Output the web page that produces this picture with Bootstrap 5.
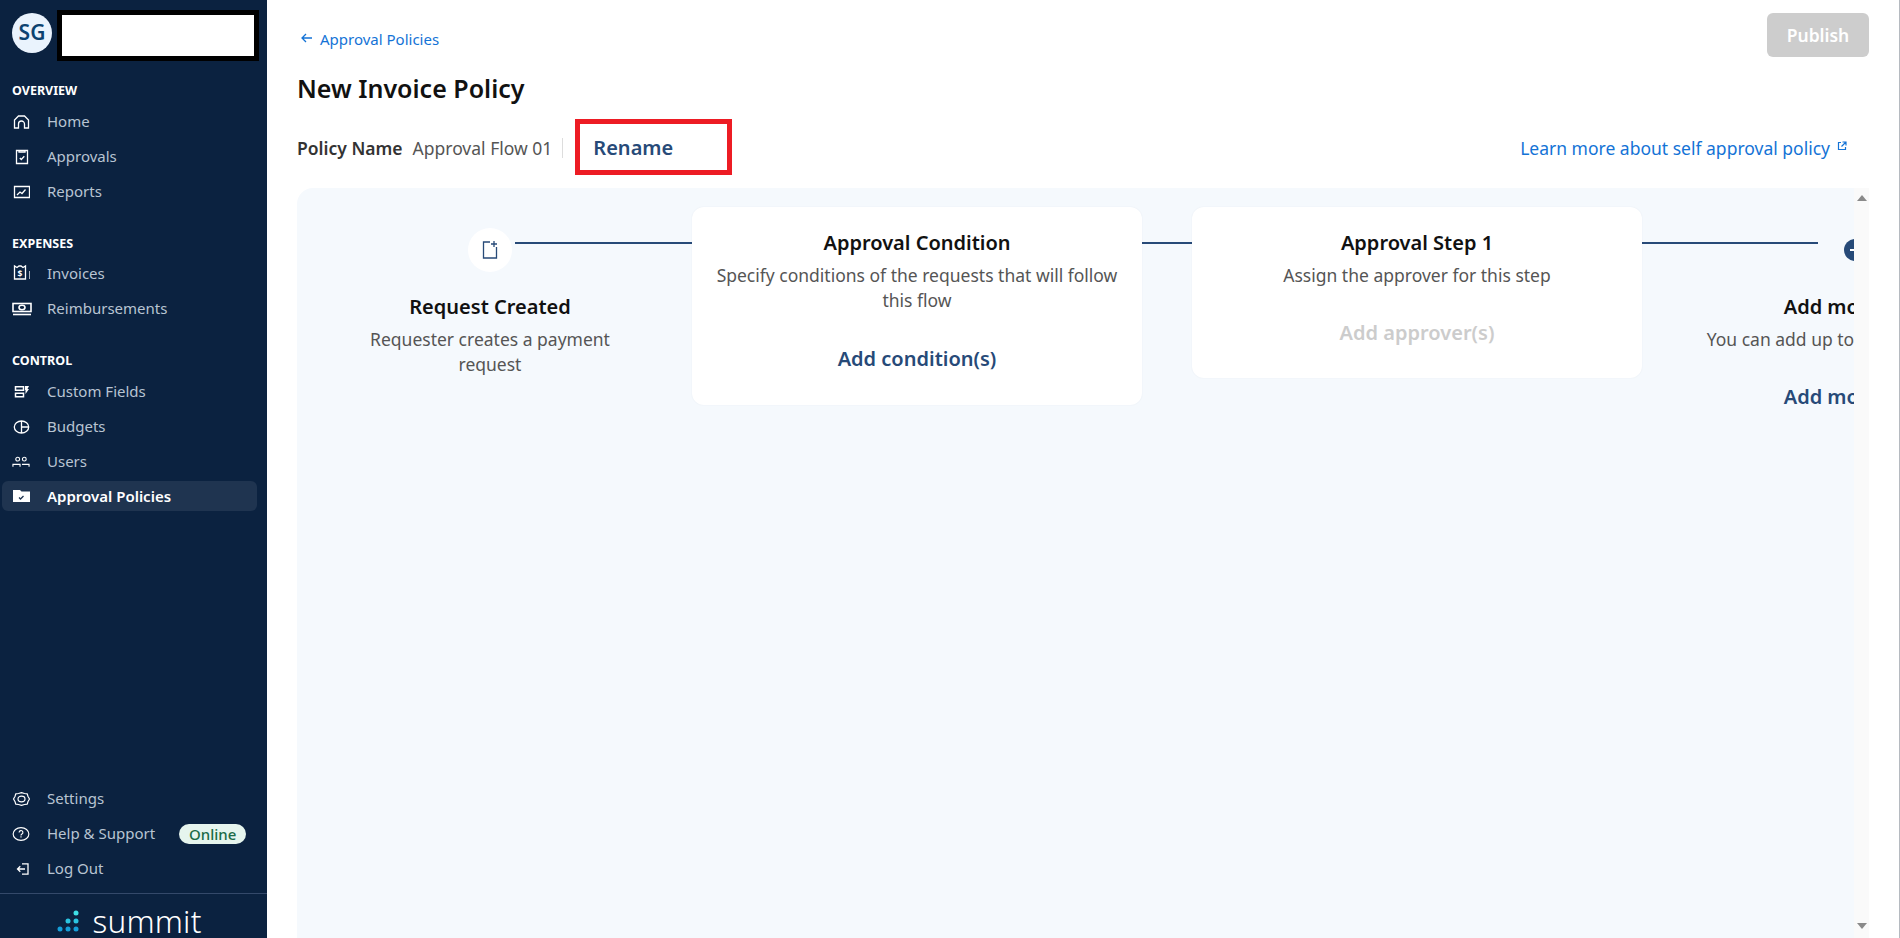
<!doctype html>
<html lang="en">
<head>
<meta charset="utf-8">
<title>New Invoice Policy</title>
<link href="https://cdn.jsdelivr.net/npm/bootstrap@5.3.0/dist/css/bootstrap.min.css" rel="stylesheet">
<style>
html,body{height:100%;overflow:hidden}
body{font-family:"Noto Sans",sans-serif;background:#fff;color:#111;border-right:1px solid #b5bac0}
.shell{height:938px}
.side{width:267px;background:#0b2240;color:#b8c4d2;flex:none}
.acct{height:69px;padding:10px 8px 0 12px;gap:5px}
.avatar{width:40px;height:40px;background:#eaf3fd;color:#0c4270;font-weight:600;font-size:21px;margin-top:3px}
.redact{width:202px;height:51px;background:#fff;border:5px solid #000}
.sect{font-size:12.5px;font-weight:700;color:#fff;padding-left:12px;line-height:16px;margin:14px 0 5px}
.sect-gap{margin:27px 0 4px}
.sect-ctl{margin:27px 0 5px}
.item{height:35px;padding-left:12px;font-size:15px;color:#b8c4d2;text-decoration:none;gap:17px}
.item svg{width:18px;height:18px;flex:none}
.item.on{background:#1f3450;color:#fff;font-weight:600;border-radius:6px;margin:2px 10px 0 2px;padding-left:10px;height:30px}
.pill{background:#e6f5ee;color:#1c6b47;font-size:15px;font-weight:500;line-height:20px;padding:0 10px;border-radius:10px;margin-left:7px}
.brand{height:45px;border-top:1px solid #34496a;gap:12px;color:#fff;padding:9px 9px 0 0;margin-top:7px}
.brandtxt{font-size:31.5px;line-height:30px;font-weight:300;letter-spacing:.2px}
.mainp{padding:13px 30px 0 30px;min-width:0}
.back{font-size:15px;color:#1473d6;text-decoration:none;gap:6px;margin:16px 0 0 3px;line-height:20px}
.pub{width:102px;height:44px;background:#cdcdcd;border:0;color:#fff;font-weight:600;font-size:17.5px;border-radius:6px}
.head1{font-size:25px;font-weight:600;color:#111;margin:15px 0 0;line-height:32px}
.pname{font-size:17.5px;height:56px;margin-top:15px}
.pname b{font-weight:600;color:#333;margin-top:2px}
.pname span.v{color:#555;margin:2px 0 0 10px}
.sepv{width:1px;height:20px;background:#ddd;margin:2px 12px 0 10px}
.renbox{width:157px;height:56px;border:5px solid #ed1c24;font-size:20px;font-weight:600;color:#274a78;padding:2px 0 0 13px}
.learn{font-size:17.5px;color:#1473d6;text-decoration:none;gap:7px;margin:2px 22px 0 auto}
.learn svg{margin-top:-5px}
.panelw{height:750px;margin-top:13px}
.panel{background:#f5f9fd;border-radius:16px 0 0 0;overflow:hidden;min-width:0}
.sbar{width:15px;background:#fafafa;flex:none;padding:7px 0 9px}
.tri-up{width:0;height:0;border-left:5px solid transparent;border-right:5px solid transparent;border-bottom:6px solid #8a8a8a}
.tri-dn{width:0;height:0;border-left:5px solid transparent;border-right:5px solid transparent;border-top:6px solid #8a8a8a}
.track{padding-top:19px;width:1700px}
.node{width:395px;flex:none;position:relative;padding-right:9px;text-align:center}
.lnk{position:absolute;top:35px;height:2px;background:#274a78}
.circ{width:44px;height:44px;background:#fff;margin:21px auto 0}
.ttl{font-size:20px;font-weight:600;color:#111;line-height:28px}
.node .ttl{margin-top:21px}
.dsc{font-size:17.5px;color:#555;line-height:25px;margin-top:6px}
.bx{width:450px;flex:none;background:#fff;border-radius:12px;text-align:center;padding:22px 20px 0;box-shadow:0 0 2px rgba(20,50,90,.06)}
.link-c{width:50px;flex:none;height:2px;background:#274a78;margin-top:35px}
.act{font-size:20px;font-weight:600;color:#274a78;line-height:28px;margin-top:31.5px}
.act.off{color:#ccc;margin-top:30.5px}
.plusw{margin-top:32px;height:22px}
.node .ttl.last{margin-top:32px}
.node .act{margin-top:30.5px}
</style>
</head>
<body>
<div class="shell d-flex">
<aside class="side d-flex flex-column">
  <div class="acct d-flex align-items-start">
    <div class="avatar rounded-circle d-flex align-items-center justify-content-center">SG</div>
    <div class="redact"></div>
  </div>
  <div class="sect">OVERVIEW</div>
  <a class="item d-flex align-items-center" href="#"><svg viewBox="0 0 18 18" fill="none" stroke="#fff" stroke-width="1.300"><path d="M2.500 15V7l4-4h6l4 4v8h-4v-4a3 3 0 0 0-6 0v4z"/></svg>Home</a>
  <a class="item d-flex align-items-center" href="#"><svg viewBox="0 0 18 18" fill="none" stroke="#fff" stroke-width="1.300"><path d="M4.500 2.500h11v13h-11z"/><path d="M7 2.500v1.500h6V2.500M7.800 10l1.500 1.500 3-3.300"/></svg>Approvals</a>
  <a class="item d-flex align-items-center" href="#"><svg viewBox="0 0 18 18" fill="none" stroke="#fff" stroke-width="1.300"><path d="M2.500 3.500h15v11h-15z"/><path d="M5 12l3-3 2 1.500 3.500-4"/></svg>Reports</a>
  <div class="sect sect-gap">EXPENSES</div>
  <a class="item d-flex align-items-center" href="#"><svg viewBox="0 0 18 18" fill="none" stroke="#fff" stroke-width="1.300" style="margin-top:-3px"><path d="M2.500 16V3l2.500 1.500L7 3h2l2 1.500L13.500 3v13z"/><path d="M18 8v8"/><text x="8" y="13.500" font-size="8.500" font-weight="700" fill="#fff" stroke="none" text-anchor="middle" font-family="Noto Sans">$</text></svg>Invoices</a>
  <a class="item d-flex align-items-center" href="#"><svg viewBox="0 0 20 18" fill="none" stroke="#fff" stroke-width="1.600" style="width:20px;margin-right:-2px"><rect x="1" y="3.500" width="18" height="8"/><ellipse cx="10" cy="7.500" rx="3" ry="2.200"/><path d="M1 14.500h18"/></svg>Reimbursements</a>
  <div class="sect sect-ctl">CONTROL</div>
  <a class="item d-flex align-items-center" href="#"><svg viewBox="0 0 18 18" fill="none" stroke="#fff" stroke-width="1.500"><path d="M3.500 3.800h8v3.400h-8zM3.500 10.300h8v3.400h-8z"/><path d="M13 3h4l-1.500 3H17l-3.500 5V7H13z" fill="#fff" stroke="none"/></svg>Custom Fields</a>
  <a class="item d-flex align-items-center" href="#"><svg viewBox="0 0 18 18" fill="none" stroke="#fff" stroke-width="1.300"><ellipse cx="9.500" cy="9" rx="7.200" ry="6"/><path d="M9.500 3v12M9.500 9h7.200"/></svg>Budgets</a>
  <a class="item d-flex align-items-center" href="#"><svg viewBox="0 0 19 18" fill="none" stroke="#fff" stroke-width="1.200"><circle cx="6" cy="6" r="2"/><circle cx="13" cy="6" r="2"/><path d="M1 14v-2.500h7.500V14M10.500 11.500H18V14"/></svg>Users</a>
  <a class="item on d-flex align-items-center" href="#"><svg viewBox="0 0 18 18"><path fill="#fff" d="M1 3h7l1.500 1.500H18V15H1z"/><path fill="none" stroke="#1f3450" stroke-width="1.300" d="M7 10.500l1.500 1.500 3-3"/></svg>Approval Policies</a>
  <div class="flex-grow-1"></div>
  <a class="item d-flex align-items-center" href="#"><svg viewBox="0 0 18 18" fill="none" stroke="#fff" stroke-width="1.200" stroke-linejoin="round"><path d="M6 3.500l3-.8 3 .8 2.800.3.600 2.400L17 9l-1.600 2.800-.6 2.400-2.800.3-3 .8-3-.8-2.800-.3-.6-2.400L1 9l1.600-2.800.6-2.400z" transform="translate(.5 0)"/><ellipse cx="9.500" cy="9" rx="3.500" ry="2.800"/></svg>Settings</a>
  <a class="item d-flex align-items-center" href="#"><svg viewBox="0 0 19 18" fill="none" stroke="#fff" stroke-width="1.200"><ellipse cx="9.500" cy="9" rx="8.300" ry="6.800"/><path d="M7.500 7.400a2 2 0 1 1 3 1.700c-.7.400-1 .8-1 1.500M9.500 11.400v1.200"/></svg>Help &amp; Support<span class="pill">Online</span></a>
  <a class="item d-flex align-items-center" href="#"><svg viewBox="0 0 18 18" fill="none" stroke="#fff" stroke-width="1.300"><path d="M10 3.800h6v10.400h-6M13 9H5.500M8.300 6.200 5.500 9l2.800 2.800"/></svg>Log Out</a>
  <div class="brand d-flex align-items-center justify-content-center">
    <svg width="24" height="22" viewBox="0 0 24 22"><circle cx="20" cy="3" r="2.500" fill="#3fe0e6"/><circle cx="20" cy="11" r="2.500" fill="#2bc4e0"/><circle cx="12" cy="11" r="2.500" fill="#2bc4e0"/><circle cx="20" cy="19" r="2.500" fill="#159fd9"/><circle cx="12" cy="19" r="2.500" fill="#159fd9"/><circle cx="4" cy="19" r="2.500" fill="#159fd9"/></svg>
    <span class="brandtxt">summit</span>
  </div>
</aside>
<main class="mainp flex-grow-1 d-flex flex-column">
  <div class="d-flex justify-content-between align-items-start">
    <a class="back d-flex align-items-center" href="#"><svg width="14" height="14" viewBox="0 0 14 14" fill="none" stroke="#1473d6" stroke-width="1.300" style="margin-top:-3px"><path d="M12 7H2M6 3L2 7l4 4"/></svg>Approval Policies</a>
    <button class="pub" type="button">Publish</button>
  </div>
  <h1 class="head1">New Invoice Policy</h1>
  <div class="pname d-flex align-items-center">
    <b>Policy Name</b><span class="v">Approval Flow 01</span><span class="sepv"></span>
    <div class="renbox d-flex align-items-center">Rename</div>
    <a class="learn d-flex align-items-center" href="#">Learn more about self approval policy<svg width="10" height="10" viewBox="0 0 10 10" fill="none" stroke="#1473d6" stroke-width="1.200"><path d="M4 1.500H1.500v7h7V6M5.500 1h3.500v3.500M9 1L4.500 5.500"/></svg></a>
  </div>
  <div class="panelw d-flex">
    <div class="panel flex-grow-1">
      <div class="track d-flex align-items-start">
        <div class="node">
          <div class="lnk" style="left:218px;right:0"></div>
          <div class="circ rounded-circle d-flex align-items-center justify-content-center"><svg width="18" height="20" viewBox="0 0 18 20" fill="none" stroke="#274a78" stroke-width="1.300"><path d="M9 2H2.500v16h13V7M13 1v6M10 4h6"/></svg></div>
          <div class="ttl">Request Created</div>
          <div class="dsc mx-auto" style="width:270px">Requester creates a payment request</div>
        </div>
        <div class="bx" style="height:198px">
          <div class="ttl">Approval Condition</div>
          <div class="dsc">Specify conditions of the requests that will follow this flow</div>
          <div class="act">Add condition(s)</div>
        </div>
        <div class="link-c"></div>
        <div class="bx" style="height:171px">
          <div class="ttl">Approval Step 1</div>
          <div class="dsc">Assign the approver for this step</div>
          <div class="act off">Add approver(s)</div>
        </div>
        <div class="node" style="padding-right:0;width:426px">
          <div class="lnk" style="left:0;width:176px"></div>
          <div class="plusw d-flex justify-content-center"><svg width="22" height="22" viewBox="0 0 22 22"><circle cx="11" cy="11" r="11" fill="#274a78"/><path d="M11 6v10M6 11h10" stroke="#fff" stroke-width="2"/></svg></div>
          <div class="ttl last">Add more step</div>
          <div class="dsc text-nowrap">You can add up to 10 approval steps</div>
          <div class="act">Add more step</div>
        </div>
      </div>
    </div>
    <div class="sbar d-flex flex-column align-items-center justify-content-between"><span class="tri-up"></span><span class="tri-dn"></span></div>
  </div>
</main>
</div>
<script src="https://cdn.jsdelivr.net/npm/bootstrap@5.3.0/dist/js/bootstrap.bundle.min.js"></script>
</body>
</html>
